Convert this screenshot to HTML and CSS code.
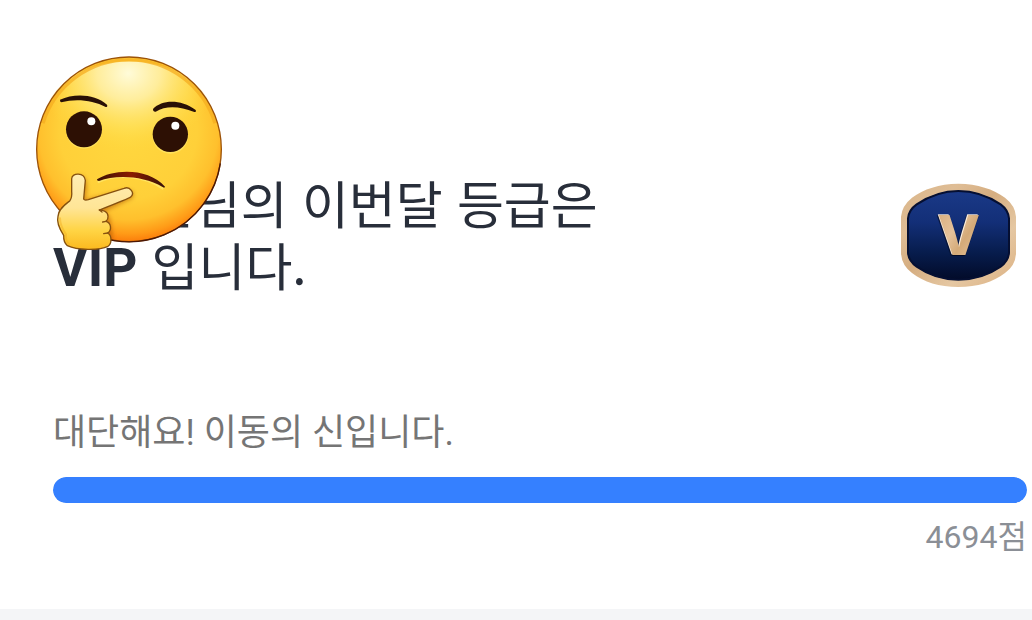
FILE: index.html
```html
<!DOCTYPE html>
<html lang="ko">
<head>
<meta charset="utf-8">
<meta name="viewport" content="width=device-width, initial-scale=1">
<title>이번달 등급</title>
<link rel="stylesheet" href="styles.css">
</head>
<body>
<main class="grade-card">
  <header class="summary">
    <h1 class="headline">이회원님의 이번달 등급은<br><strong>VIP</strong> 입니다.</h1>
    <svg class="badge" viewBox="30 36 348 315" role="img" aria-label="VIP">
      <defs>
        <linearGradient id="rim" x1="0" y1="0" x2="1" y2="1">
          <stop offset="0" stop-color="#d9b589"/><stop offset=".25" stop-color="#dfbd95"/><stop offset=".45" stop-color="#d5ad80"/><stop offset=".7" stop-color="#e5c7a2"/><stop offset="1" stop-color="#dcb182"/>
        </linearGradient>
        <linearGradient id="navy" x1="0" y1="0" x2="0" y2="1">
          <stop offset="0" stop-color="#1a3987"/><stop offset=".35" stop-color="#132f78"/><stop offset=".7" stop-color="#071c4c"/><stop offset="1" stop-color="#020b29"/>
        </linearGradient>
        <linearGradient id="gold" x1="0" y1="0" x2="1" y2="1">
          <stop offset="0" stop-color="#d5a978"/><stop offset=".4" stop-color="#e5c29a"/><stop offset=".6" stop-color="#d4aa78"/><stop offset="1" stop-color="#edcda7"/>
        </linearGradient>
      </defs>
      <path fill="url(#rim)" d="M205 38C263 39 310 54 345 80Q376 104 378 137V248Q376 284 345 306C309 333 263 348 205 348S102 333 66 306Q36 284 33 248V137Q36 104 66 80C101 54 147 39 205 38Z"/>
      <path fill="url(#navy)" stroke="#050f32" stroke-width="6" d="M205 60C258 60 296 76 332 100Q355 117 357 142V246Q355 270 332 287C296 312 258 326 205 326S116 312 80 287Q56 270 54 246V142Q56 117 80 100C116 76 152 60 205 60Z"/>
      <text class="badge-letter" x="206" y="253" text-anchor="middle" fill="url(#gold)">V</text>
    </svg>
  </header>
  <section class="score">
    <label class="message" for="points">대단해요! 이동의 신입니다.</label>
    <progress class="bar" id="points" value="100" max="100"></progress>
    <p class="points">4694점</p>
  </section>
  <svg class="face" viewBox="0 0 660 660" role="img" aria-label="생각하는 얼굴">
    <defs>
      <radialGradient id="skin" gradientUnits="userSpaceOnUse" cx="325" cy="270" r="345">
        <stop offset="0" stop-color="#ffd83f"/><stop offset=".6" stop-color="#ffd039"/><stop offset=".78" stop-color="#ffc02d"/><stop offset=".9" stop-color="#ff9b17"/><stop offset="1" stop-color="#fa7106"/>
      </radialGradient>
      <radialGradient id="shine" gradientUnits="userSpaceOnUse" cx="325" cy="100" r="270" gradientTransform="translate(0 14) scale(1 .86)">
        <stop offset="0" stop-color="#fffbd9"/><stop offset=".35" stop-color="#fff0a6" stop-opacity=".9"/><stop offset=".7" stop-color="#ffe566" stop-opacity=".5"/><stop offset="1" stop-color="#ffd93d" stop-opacity="0"/>
      </radialGradient>
      <linearGradient id="hand" x1="0" y1="0" x2="0" y2="1">
        <stop offset="0" stop-color="#ffeeb5"/><stop offset=".45" stop-color="#ffe596"/><stop offset=".75" stop-color="#ffd444"/><stop offset="1" stop-color="#fbb91f"/>
      </linearGradient>
      <linearGradient id="lip" x1="0" y1="0" x2="1" y2="0">
        <stop offset="0" stop-color="#3a1005"/><stop offset=".5" stop-color="#8b1b00"/><stop offset="1" stop-color="#35110a"/>
      </linearGradient>
      <filter id="soft" x="-30%" y="-30%" width="160%" height="160%"><feGaussianBlur stdDeviation="7"/></filter>
      <clipPath id="disc"><circle cx="327" cy="328" r="276"/></clipPath>
    </defs>
    <circle cx="327" cy="328" r="277" fill="url(#skin)"/>
    <ellipse cx="327" cy="250" rx="258" ry="186" fill="url(#shine)"/>
    <path d="M69 250A270 270 0 0 1 585 250" fill="none" stroke="#f6ae20" stroke-width="10" opacity=".75"/>
    <circle cx="327" cy="328" r="277" fill="none" stroke="#9c5208" stroke-width="4"/>
    <path d="M161 550A277 277 0 0 0 601 370" fill="none" stroke="#4b1705" stroke-width="4"/>
    <g fill="#fff07a" opacity=".5"><circle cx="192" cy="272" r="54"/><circle cx="451" cy="287" r="54"/></g>
    <g fill="#2d1004"><circle cx="192" cy="268" r="54"/><circle cx="451" cy="283" r="53"/></g>
    <g fill="#fff"><circle cx="214" cy="244" r="12"/><circle cx="466" cy="257" r="12"/></g>
    <path fill="#291006" d="M120 179C162 160 224 161 261 194Q264 201 257 201C219 181 168 175 124 187Q119 185 120 179ZM399 207C425 180 480 176 527 210Q530 216 523 216C478 198 438 196 407 215Q399 216 399 207Z"/>
    <path d="M233 427C287 400 375 407 430 447" fill="none" stroke="#fff07c" stroke-width="6" opacity=".6"/>
    <path fill="url(#lip)" d="M231 418C282 385 387 384 435 440Q434 445 428 441C370 406 285 404 237 423Q230 423 231 418Z"/>
    <g clip-path="url(#disc)"><path filter="url(#soft)" fill="#a94d00" opacity=".55" d="M178 405Q202 410 200 444L196 480L319 449Q349 451 336 475L254 514Q276 535 272 557Q286 597 263 628H190Z"/></g>
    <path fill="url(#hand)" stroke="#86510f" stroke-width="4" stroke-linejoin="round" d="M155 416C156 397 193 397 196 421L191 477Q193 482 205 479L312 445C330 438 346 459 332 471Q328 475 238 510C250 510 264 516 264 529Q265 538 258 544C274 548 276 571 263 579C276 586 276 610 264 619C238 632 171 631 142 617Q130 607 131 586C122 572 108 550 114 529C116 506 136 493 149 483Q157 472 155 454Z"/>
    <path fill="none" stroke="#86510f" stroke-width="4" stroke-linecap="round" d="M238 510L246 516M248 546L258 544M251 581L263 579"/>
    <path fill="none" stroke="#f2ad20" stroke-width="6" stroke-linecap="round" opacity=".45" d="M120 535Q120 558 138 583Q136 602 147 612"/>
  </svg>
</main>
</body>
</html>
```
FILE: styles.css
```css
* {
  box-sizing: border-box;
}

body {
  margin: 0;
  background: #f4f5f7;
  font-family: "Noto Sans CJK KR", sans-serif;
}

.grade-card {
  position: relative;
  padding: 171px 5px 52px 53px;
  background: #fff;
}

.summary {
  display: flex;
  justify-content: space-between;
  align-items: center;
  padding-right: 11px;
}

.headline {
  margin: 0;
  color: #282e3a;
  font-size: 51px;
  font-weight: 400;
  line-height: 62px;
}

.headline strong {
  font-family: Roboto, sans-serif;
  font-size: 53px;
  font-weight: 700;
}

.badge {
  flex: none;
  width: 116px;
  height: 105px;
}

.badge-letter {
  font-family: Inter, sans-serif;
  font-size: 166px;
  font-weight: 800;
  filter: drop-shadow(-3px -2px 0 #fff3e4) drop-shadow(-2px 3px 2px #020a25);
}

.score {
  display: flex;
  flex-direction: column;
  padding-top: 110px;
}

.message {
  color: #757575;
  font-family: Roboto, "Noto Sans CJK KR", sans-serif;
  font-size: 36px;
  line-height: 48px;
}

.bar {
  appearance: none;
  width: 100%;
  height: 26px;
  margin-top: 20px;
  border: 0;
  border-radius: 13px;
  overflow: hidden;
  background: #e9edf3;
}

.bar::-webkit-progress-bar {
  background: #e9edf3;
}

.bar::-webkit-progress-value {
  border-radius: 13px;
  background: #3580ff;
}

.points {
  margin: 14px 0 0;
  color: #8b8f96;
  font-family: Roboto, "Noto Sans CJK KR", sans-serif;
  font-size: 32px;
  line-height: 40px;
  text-align: right;
}

.face {
  position: absolute;
  top: 40px;
  left: 20px;
  width: 220px;
  height: 220px;
}
```
